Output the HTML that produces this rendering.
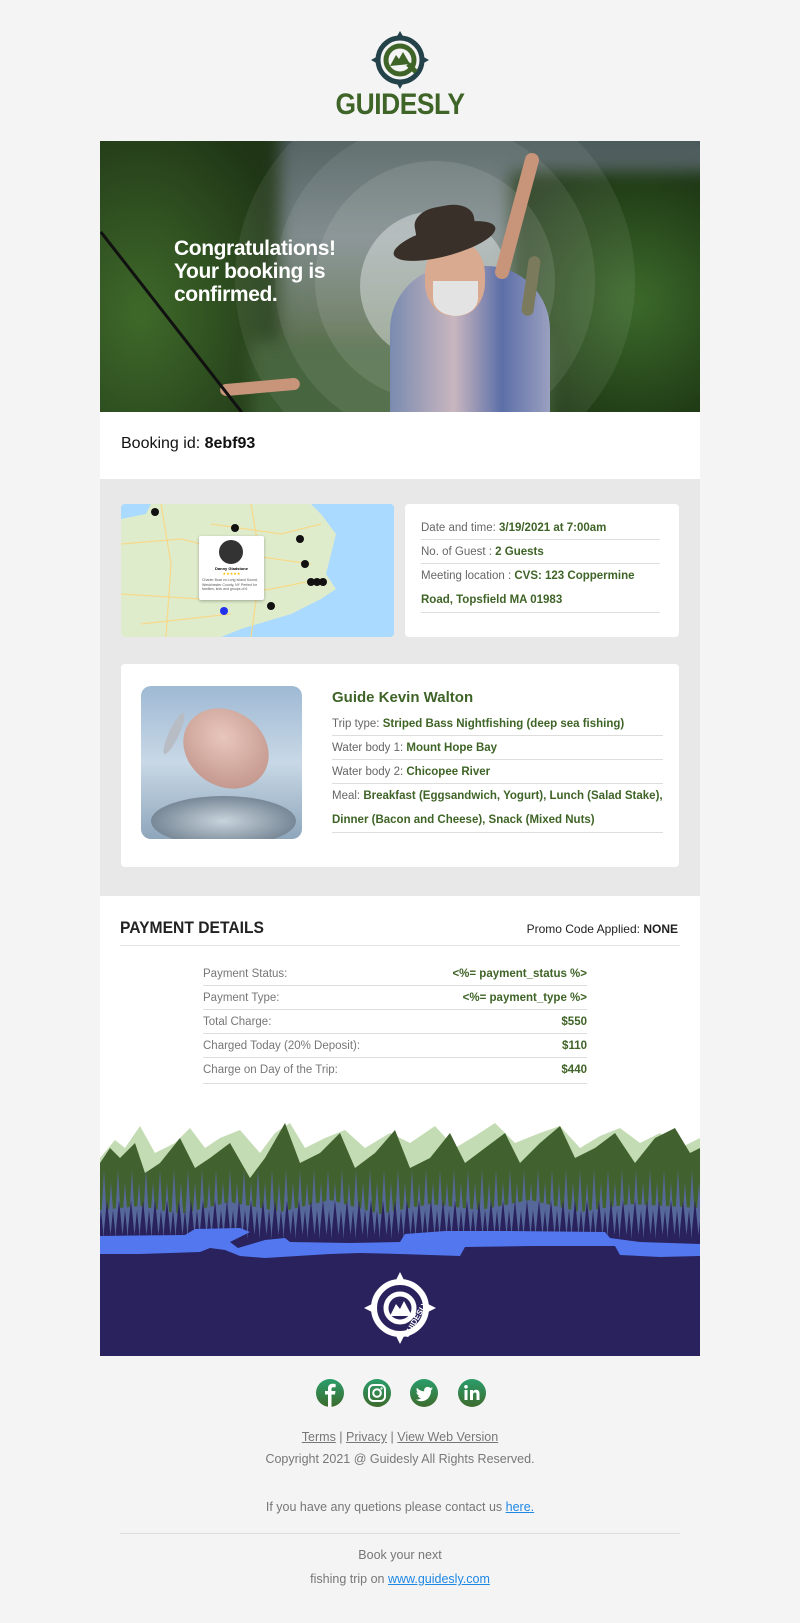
<!DOCTYPE html>
<html><head><meta charset="utf-8">
<style>
*{margin:0;padding:0;box-sizing:border-box}
body{width:800px;height:1623px;background:#f4f4f4;font-family:"Liberation Sans",Arial,sans-serif;position:relative;overflow:hidden}
.abs{position:absolute}
.g{color:#3f6427;font-weight:bold}
.row{position:absolute;left:0;right:0;border-bottom:1px solid #ddd;height:24px;line-height:24px;font-size:11.5px;color:#777}
.bl{filter:blur(8px)}
</style></head><body>

<!-- logo -->
<svg class="abs" style="left:370px;top:30px" width="60" height="60" viewBox="0 0 60 60">
 <g fill="#24424a">
  <polygon points="30,1 34,8 26,8"/><polygon points="30,59 34,52 26,52"/>
  <polygon points="1,30 8,26 8,34"/><polygon points="59,30 52,26 52,34"/>
 </g>
 <circle cx="30" cy="30" r="22" fill="none" stroke="#24424a" stroke-width="5"/>
 <circle cx="30" cy="30" r="14" fill="none" stroke="#3f6427" stroke-width="5"/>
 <path d="M20 36 L26 25 L29 29 L33 22 L40 34 Z" fill="#3f6427"/>
 <path d="M38 34 L46 42" stroke="#3f6427" stroke-width="5"/>
</svg>
<div class="abs" style="left:300px;width:200px;top:88px;text-align:center;font-size:30px;font-weight:bold;color:#3f6427;letter-spacing:-0.5px;transform:scaleX(0.88)">GUIDESLY</div>

<!-- hero -->
<div class="abs" style="left:100px;top:141px;width:600px;height:271px;overflow:hidden;background:linear-gradient(180deg,#4b5a5a 0%,#6c7a7c 35%,#4a5f3e 70%,#2d4222 100%)">
 <div class="abs bl" style="left:-20px;top:-20px;width:200px;height:320px;background:radial-gradient(ellipse at 30% 60%,#3f6a2a,#1f3516 80%)"></div>
 <div class="abs bl" style="right:-20px;top:30px;width:210px;height:260px;background:radial-gradient(ellipse at 60% 50%,#3c6a2b,#1b3312 80%)"></div>
 <div class="abs bl" style="left:150px;top:200px;width:300px;height:90px;background:#3a5a30"></div>
 <div class="abs" style="left:135px;top:-60px;width:400px;height:400px;border-radius:50%;background:rgba(255,255,255,0.07)"></div>
 <div class="abs" style="left:175px;top:-20px;width:320px;height:320px;border-radius:50%;background:rgba(255,255,255,0.08)"></div>
 <div class="abs" style="left:215px;top:20px;width:240px;height:240px;border-radius:50%;background:rgba(255,255,255,0.1)"></div>
 <div class="abs" style="left:260px;top:70px;width:150px;height:150px;border-radius:50%;background:rgba(230,235,235,0.45)"></div>
 <div class="abs" style="left:290px;top:125px;width:160px;height:160px;border-radius:40% 40% 0 0;background:linear-gradient(90deg,#7a8bb0,#c9b6bf 40%,#5c6fa8 70%,#9aa0c0)"></div>
 <div class="abs" style="left:325px;top:100px;width:60px;height:75px;border-radius:45%;background:#d9a990"></div>
 <div class="abs" style="left:333px;top:140px;width:45px;height:35px;border-radius:0 0 50% 50%;background:#e3e3e3"></div>
 <div class="abs" style="left:292px;top:85px;width:105px;height:30px;border-radius:50%;background:#3a302a;transform:rotate(-15deg)"></div>
 <div class="abs" style="left:315px;top:65px;width:60px;height:40px;border-radius:40% 40% 10% 10%;background:#3a302a;transform:rotate(-10deg)"></div>
 <div class="abs" style="left:410px;top:10px;width:14px;height:130px;background:#c9957a;transform:rotate(15deg);border-radius:7px"></div>
 <div class="abs" style="left:425px;top:115px;width:12px;height:60px;background:#7c7a5c;border-radius:6px;transform:rotate(8deg)"></div>
 <div class="abs" style="left:120px;top:240px;width:80px;height:12px;background:#c9957a;border-radius:6px;transform:rotate(-5deg)"></div>
 <div class="abs" style="width:240px;height:3px;background:#111;transform:rotate(52deg);transform-origin:0 0;left:2px;top:90px"></div>
 <div class="abs" style="left:74px;top:96px;color:#fff;font-size:21px;font-weight:bold;line-height:23px;letter-spacing:-0.4px">Congratulations!<br>Your booking is<br>confirmed.</div>
</div>

<!-- booking id -->
<div class="abs" style="left:100px;top:412px;width:600px;height:67px;background:#fff"></div>
<div class="abs" style="left:121px;top:435px;font-size:16px;color:#111">Booking id: <b>8ebf93</b></div>

<!-- gray section -->
<div class="abs" style="left:100px;top:479px;width:600px;height:417px;background:#e8e8e8"></div>

<!-- map -->
<div class="abs" style="left:121px;top:504px;width:273px;height:133px;border-radius:4px;overflow:hidden;background:#dfeccb">
 <svg width="273" height="133" viewBox="0 0 273 133" style="position:absolute;left:0;top:0">
  <path d="M190 0 L273 0 L273 133 L100 133 L120 125 L170 110 L200 95 L215 85 L205 70 L210 50 L215 30 L200 10 Z" fill="#aadaff"/>
  <path d="M0 0 L30 0 L25 10 L0 15 Z" fill="#aadaff"/>
  <g stroke="#f6d98b" stroke-width="1.2" fill="none">
   <path d="M0 40 L60 35 L120 50 L190 60"/><path d="M40 0 L50 60 L45 133"/><path d="M130 0 L140 60 L130 133"/>
   <path d="M0 90 L80 95 L150 85 L200 75"/><path d="M90 20 L160 30 L200 20"/><path d="M20 120 L110 110"/>
  </g>
  <g fill="#111">
   <circle cx="34" cy="8" r="4"/><circle cx="114" cy="24" r="4"/><circle cx="179" cy="35" r="4"/><circle cx="184" cy="60" r="4"/>
   <circle cx="190" cy="78" r="4"/><circle cx="196" cy="78" r="4"/><circle cx="202" cy="78" r="4"/><circle cx="150" cy="102" r="4"/>
  </g>
  <circle cx="103" cy="107" r="4" fill="#2233ee"/>
 </svg>
 <div class="abs" style="left:78px;top:32px;width:65px;height:64px;background:#fff;border-radius:2px;box-shadow:0 1px 3px rgba(0,0,0,.3)">
  <div class="abs" style="left:20px;top:4px;width:24px;height:24px;border-radius:50%;background:#333"></div>
  <div class="abs" style="left:0;right:0;top:30px;text-align:center;font-size:4px;font-weight:bold">Danny Gladstone</div>
  <div class="abs" style="left:0;right:0;top:35px;text-align:center;font-size:4px;color:#f5c000">★★★★★</div>
  <div class="abs" style="left:3px;right:3px;top:42px;font-size:3.5px;color:#555;line-height:4.5px">Charter Boat on Long Island Sound, Westchester County, NY Perfect for families, kids and groups of 6</div>
 </div>
</div>

<!-- info card -->
<div class="abs" style="left:405px;top:504px;width:274px;height:133px;background:#fff;border-radius:4px">
 <div class="abs" style="left:16px;right:19px;top:12px">
  <div style="height:24px;line-height:24px;border-bottom:1px solid #ddd;font-size:11.5px;color:#666">Date and time: <span class="g">3/19/2021 at 7:00am</span></div>
  <div style="height:24px;line-height:24px;border-bottom:1px solid #ddd;font-size:11.5px;color:#666">No. of Guest : <span class="g">2 Guests</span></div>
  <div style="line-height:24px;border-bottom:1px solid #ddd;font-size:11.5px;color:#666">Meeting location : <span class="g">CVS: 123 Coppermine Road, Topsfield MA 01983</span></div>
 </div>
</div>

<!-- guide card -->
<div class="abs" style="left:121px;top:664px;width:558px;height:203px;background:#fff;border-radius:4px"></div>
<div class="abs" style="left:141px;top:686px;width:161px;height:153px;border-radius:10px;overflow:hidden;background:linear-gradient(180deg,#9fb9d4,#c8d8e6 50%,#8ea6bb)">
 <div class="abs" style="left:40px;top:25px;width:90px;height:75px;border-radius:50%;background:radial-gradient(ellipse at 40% 40%,#e8c6bc,#b98a80);transform:rotate(35deg)"></div>
 <div class="abs" style="left:28px;top:25px;width:10px;height:45px;border-radius:50%;background:#b8bcc4;transform:rotate(25deg)"></div>
 <div class="abs" style="left:10px;top:110px;width:145px;height:50px;border-radius:50%;background:radial-gradient(ellipse,#c8d4dc,#56687a)"></div>
</div>
<div class="abs" style="left:332px;top:689px;font-size:15px;color:#3f6427;font-weight:bold">Guide Kevin Walton</div>
<div class="abs" style="left:332px;top:712px;width:331px;font-size:11.5px;color:#666">
 <div style="height:24px;line-height:24px;border-bottom:1px solid #ddd">Trip type: <span class="g">Striped Bass Nightfishing (deep sea fishing)</span></div>
 <div style="height:24px;line-height:24px;border-bottom:1px solid #ddd">Water body 1: <span class="g">Mount Hope Bay</span></div>
 <div style="height:24px;line-height:24px;border-bottom:1px solid #ddd">Water body 2: <span class="g">Chicopee River</span></div>
 <div style="line-height:24px;border-bottom:1px solid #ddd">Meal: <span class="g">Breakfast (Eggsandwich, Yogurt), Lunch (Salad Stake), Dinner (Bacon and Cheese), Snack (Mixed Nuts)</span></div>
</div>

<!-- payment -->
<div class="abs" style="left:100px;top:896px;width:600px;height:222px;background:#fff"></div>
<div class="abs" style="left:120px;top:918px;font-size:17px;color:#222;font-weight:bold;transform:scaleX(0.92);transform-origin:0 0">PAYMENT DETAILS</div>
<div class="abs" style="right:122px;top:922px;font-size:12px;color:#222">Promo Code Applied: <b>NONE</b></div>
<div class="abs" style="left:120px;top:945px;width:560px;height:1px;background:#e3e3e3"></div>
<div class="abs" style="left:203px;top:962px;width:384px;height:130px">
 <div class="row" style="top:0">Payment Status:<span class="g" style="float:right">&lt;%= payment_status %&gt;</span></div>
 <div class="row" style="top:24px">Payment Type:<span class="g" style="float:right">&lt;%= payment_type %&gt;</span></div>
 <div class="row" style="top:48px">Total Charge:<span class="g" style="float:right">$550</span></div>
 <div class="row" style="top:72px">Charged Today (20% Deposit):<span class="g" style="float:right">$110</span></div>
 <div class="row" style="top:96px;height:26px">Charge on Day of the Trip:<span class="g" style="float:right">$440</span></div>
</div>

<!-- mountains -->
<svg class="abs" style="left:100px;top:1118px" width="600" height="238" viewBox="0 0 600 238">
 <defs>
  <pattern id="tb" x="0" y="52" width="14" height="70" patternUnits="userSpaceOnUse">
   <polygon points="4,0 8,70 0,70" fill="#56679a"/>
   <polygon points="11,12 15,70 7,70" fill="#56679a"/>
  </pattern>
  <pattern id="tn" x="3" y="82" width="12" height="40" patternUnits="userSpaceOnUse">
   <polygon points="4,0 8,40 0,40" fill="#29225d"/>
   <polygon points="10,10 13,40 7,40" fill="#29225d"/>
  </pattern>
 </defs>
 <rect width="600" height="238" fill="#fff"/>
 <path d="M0 40 L15 22 L25 30 L40 8 L55 35 L75 25 L90 10 L105 30 L120 20 L140 12 L160 35 L175 15 L190 5 L205 30 L225 20 L245 12 L265 30 L290 15 L310 25 L335 8 L355 30 L375 18 L395 5 L415 25 L440 15 L460 8 L480 30 L500 18 L520 10 L540 25 L560 15 L580 30 L600 20 L600 238 L0 238 Z" fill="#c4dcb4"/>
 <path d="M0 45 L10 30 L20 40 L35 25 L45 55 L60 45 L80 20 L95 50 L110 40 L130 25 L150 60 L165 40 L185 5 L200 45 L220 35 L240 15 L255 50 L275 35 L295 12 L310 50 L330 40 L350 15 L365 45 L385 30 L405 15 L420 45 L440 25 L460 8 L475 40 L495 30 L515 15 L535 45 L555 20 L575 10 L590 35 L600 30 L600 238 L0 238 Z" fill="#41622f"/>
 <rect x="0" y="52" width="600" height="70" fill="url(#tb)"/>
 <path d="M0 92 L40 88 L80 96 L130 84 L180 94 L230 82 L280 96 L330 86 L380 92 L430 82 L480 94 L530 86 L600 90 L600 238 L0 238Z" fill="#56679a"/>
 <rect x="0" y="82" width="600" height="40" fill="url(#tn)"/>
 <rect x="0" y="120" width="600" height="118" fill="#29225d"/>
 <path d="M0 118 L85 117 L95 111 L140 110 L150 114 L130 124 L138 130 L165 122 L185 120 L190 124 L250 125 L300 124 L305 116 L345 113 L410 113 L505 114 L510 120 L540 124 L600 126 L600 138 L560 139 L520 137 L515 128 L430 128 L365 129 L360 138 L300 136 L260 135 L230 136 L165 140 L140 138 L125 132 L110 130 L100 134 L40 136 L0 136 Z" fill="#5277ee"/>
 <g transform="translate(300,190)">
  <polygon points="0,-36 4,-28 -4,-28" fill="#fff"/><polygon points="0,36 4,28 -4,28" fill="#fff"/>
  <polygon points="-36,0 -28,-4 -28,4" fill="#fff"/><polygon points="36,0 28,-4 28,4" fill="#fff"/>
  <circle r="26" fill="none" stroke="#fff" stroke-width="6"/>
  <circle r="14" fill="none" stroke="#fff" stroke-width="5"/>
  <path d="M-10 8 L-4 -4 L0 1 L4 -7 L12 8 Z" fill="#fff"/>
  <text x="8" y="30" transform="rotate(-60 8 30)" font-size="8" font-weight="bold" fill="#fff" font-family="Liberation Sans">GUIDESLY</text>
 </g>
</svg>

<!-- social -->
<svg class="abs" style="left:316px;top:1379px" width="172" height="28" viewBox="0 0 172 28">
 <defs><linearGradient id="sg" x1="0" y1="0" x2="0" y2="1"><stop offset="0" stop-color="#2a9d6a"/><stop offset="1" stop-color="#3d6b2d"/></linearGradient></defs>
 <circle cx="14" cy="14" r="14" fill="url(#sg)"/>
 <path d="M15.5 28 V15.5 H19 L19.5 12 H15.5 V9.8 C15.5 8.8 16 8.2 17.2 8.2 H19.6 V5 C19 5 17.8 4.8 16.5 4.8 C13.7 4.8 12 6.5 12 9.4 V12 H9 V15.5 H12 V28 Z" fill="#fff"/>
 <circle cx="61" cy="14" r="14" fill="url(#sg)"/>
 <rect x="53" y="6" width="16" height="16" rx="4.5" fill="none" stroke="#fff" stroke-width="2"/>
 <circle cx="61" cy="14" r="3.8" fill="none" stroke="#fff" stroke-width="2"/>
 <circle cx="65.5" cy="9.5" r="1.1" fill="#fff"/>
 <circle cx="108" cy="14" r="14" fill="url(#sg)"/>
 <path d="M117 9.5 C116.3 9.8 115.6 10 114.9 10.1 C115.7 9.6 116.2 8.9 116.5 8.1 C115.8 8.5 115 8.8 114.2 9 C112.8 7.5 110.4 7.6 109 9.1 C108.2 10 107.9 11.2 108.2 12.4 C105.4 12.3 102.8 11 101 8.8 C100.1 10.4 100.5 12.4 102 13.5 C101.5 13.5 101 13.3 100.5 13.1 C100.5 14.8 101.7 16.2 103.3 16.6 C102.8 16.7 102.3 16.8 101.8 16.7 C102.3 18.1 103.5 19.1 105 19.1 C103.5 20.3 101.6 20.8 99.8 20.6 C101.4 21.6 103.3 22.2 105.2 22.2 C111.6 22.2 115.2 16.8 115.1 11.2 C115.8 10.7 116.5 10.1 117 9.5Z" fill="#fff"/>
 <circle cx="156" cy="14" r="14" fill="url(#sg)"/>
 <rect x="148.5" y="11" width="3" height="10" fill="#fff"/><circle cx="150" cy="7.8" r="1.8" fill="#fff"/>
 <path d="M154 11 H157 V12.5 C157.6 11.4 158.8 10.8 160.2 10.8 C162.7 10.8 163.5 12.4 163.5 15 V21 H160.5 V15.6 C160.5 14.4 160.2 13.5 159 13.5 C157.7 13.5 157 14.4 157 15.8 V21 H154 Z" fill="#fff"/>
</svg>

<!-- footer text -->
<div class="abs" style="left:0;width:800px;top:1428px;text-align:center;font-size:12.5px;color:#777;line-height:18px">
 <span style="text-decoration:underline">Terms</span> | <span style="text-decoration:underline">Privacy</span> | <span style="text-decoration:underline">View Web Version</span>
</div>
<div class="abs" style="left:0;width:800px;top:1452px;text-align:center;font-size:12.5px;color:#777">Copyright 2021 @ Guidesly All Rights Reserved.</div>
<div class="abs" style="left:0;width:800px;top:1500px;text-align:center;font-size:12.5px;color:#777">If you have any quetions please contact us <span style="color:#1e88e5;text-decoration:underline">here.</span></div>
<div class="abs" style="left:120px;top:1533px;width:560px;height:1px;background:#ddd"></div>
<div class="abs" style="left:0;width:800px;top:1548px;text-align:center;font-size:12.5px;color:#777">Book your next</div>
<div class="abs" style="left:0;width:800px;top:1572px;text-align:center;font-size:12.5px;color:#777">fishing trip on <span style="color:#1e88e5;text-decoration:underline">www.guidesly.com</span></div>

</body></html>
